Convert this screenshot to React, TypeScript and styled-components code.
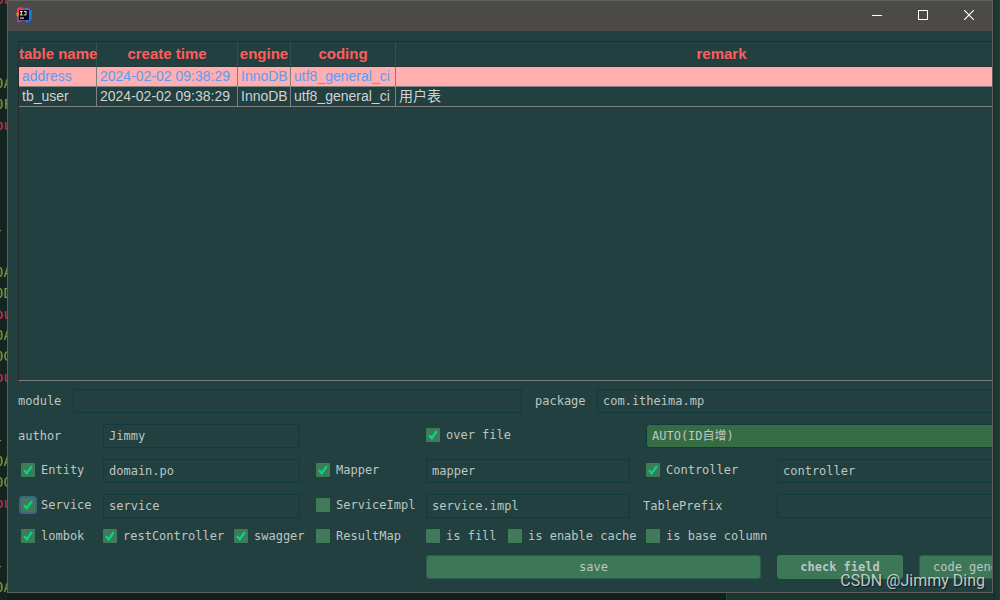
import React from "react";
import styled, { createGlobalStyle, css } from "styled-components";

const mono = `"DejaVu Sans Mono", "Noto Sans CJK SC", monospace`;
const sans = `"Liberation Sans", "Noto Sans CJK SC", sans-serif`;

const color = {
  panel: "#21403f",
  title: "#4c4a48",
  frame: "#5f5f5c",
  fieldLine: "#0f3a40",
  text: "#bfc5c2",
  button: "#3c7858",
  grid: "#808080",
};

const GlobalStyle = createGlobalStyle`
  * { box-sizing: border-box; }
  body { margin: 0; background: #122220; }
  button, input, select { font: inherit; color: inherit; margin: 0; }
`;

const Desktop = styled.div`
  position: relative;
  display: grid;
  grid-template-columns: 7px minmax(0, 1fr) 7px;
  grid-template-rows: minmax(0, 1fr) 7px;
  height: 100vh;
  min-height: 480px;
  overflow: hidden;
  background: #132421;
  font: 12px/16px ${mono};
  color: ${color.text};
`;

const EditorEdge = styled.div`
  grid-row: 1 / 3;
  display: flex;
  flex-direction: column;
  overflow: hidden;
  margin-top: -11px;
  font-size: 14px;
  line-height: 21px;
`;

const CodeLine = styled.div<{ $tone: Tone }>`
  flex: none;
  height: 21px;
  text-indent: -5px;
  white-space: nowrap;
  color: ${(p) => (p.$tone === "keyword" ? "#d0344f" : "#7c9c3e")};
`;

const RightEdge = styled.div`
  grid-row: 1 / 3;
  grid-column: 3;
  background: linear-gradient(90deg, #17302e, #1f3d3a);
`;

const BottomEdge = styled.div`
  grid-row: 2;
  grid-column: 2;
  display: flex;
  &::before {
    content: "";
    flex: 720;
    background: #0f1f1e;
  }
  &::after {
    content: "";
    flex: 266;
    background: #1a3432;
    border-left: 1px solid #24423f;
  }
`;

const Window = styled.main`
  grid-row: 1;
  grid-column: 2;
  display: flex;
  flex-direction: column;
  min-width: 0;
  overflow: hidden;
  border: 1px solid ${color.frame};
  background: ${color.panel};
`;

const TitleBar = styled.header`
  display: flex;
  align-items: center;
  justify-content: space-between;
  height: 30px;
  flex: none;
  padding-left: 8px;
  background: ${color.title};
`;

const TitleIcon = styled.span`
  display: flex;
  padding-bottom: 2px;
`;

const WindowControls = styled.div`
  display: flex;
  height: 100%;
`;

const ControlButton = styled.button`
  display: flex;
  align-items: center;
  justify-content: center;
  width: 46px;
  padding: 0 0 2px;
  border: 0;
  background: none;
  color: #fff;
`;

const Content = styled.div`
  flex: 1;
  min-height: 0;
  display: flex;
  flex-direction: column;
  padding: 10px 0 13px 10px;
`;

const TablePane = styled.section`
  flex: 1;
  min-height: 0;
  overflow: hidden;
  margin-bottom: 8px;
  border: solid #2b2b2b;
  border-width: 1px 0 0 1px;
  border-bottom: 1px solid #7d7a7a;
`;

const DataTable = styled.table`
  width: calc(100% + 56px);
  table-layout: fixed;
  border-collapse: separate;
  border-spacing: 0;
  font: 14px/19px ${sans};
`;

const HeadCell = styled.th`
  height: 25px;
  padding: 0;
  border-right: 1px solid #28554c;
  border-bottom: 1px solid #2b3436;
  font-size: 15px;
  line-height: 24px;
  color: #ff5d5d;
  white-space: nowrap;
`;

const BodyRow = styled.tr<{ $selected: boolean }>`
  background: ${(p) => (p.$selected ? "#ffafaf" : "transparent")};
  color: ${(p) => (p.$selected ? "#589df6" : "#d0d3d2")};
`;

const BodyCell = styled.td`
  height: 20px;
  padding: 0 0 0 3px;
  border-right: 1px solid ${color.grid};
  border-bottom: 1px solid ${color.grid};
  white-space: nowrap;
`;

const Form = styled.form`
  flex: none;
  display: flex;
  flex-direction: column;
  gap: 11px;
`;

const NameRow = styled.div`
  display: grid;
  grid-template-columns: 55px minmax(0, 449fr) 75px minmax(0, 395fr);
  align-items: center;
`;

const FieldRow = styled.div`
  display: grid;
  grid-template-columns: 85px minmax(0, 213fr) 110px minmax(0, 217fr) 134px minmax(0, 215fr);
`;

const OptionRow = styled(FieldRow)`
  height: 15px;
  align-items: start;
`;

const Cell = styled.div<{ $from?: number; $span?: number; $end?: number }>`
  display: flex;
  align-items: center;
  min-width: 0;
  ${(p) => p.$from && css`grid-column: ${p.$from} / span ${p.$span ?? 1};`}
  padding-right: ${(p) => p.$end ?? 0}px;
`;

const PairCell = styled.div<{ $first: number }>`
  display: grid;
  grid-template-columns: ${(p) => p.$first}px 1fr;
`;

const Label = styled.label<{ $inset?: boolean }>`
  padding-left: ${(p) => (p.$inset ? 13 : 0)}px;
  line-height: 24px;
  white-space: nowrap;
`;

const TextField = styled.input<{ $cut?: boolean }>`
  width: 100%;
  min-width: 0;
  height: 24px;
  padding: 0 5px;
  border: 1px solid ${color.fieldLine};
  ${(p) => p.$cut && css`border-right: 0;`}
  background: transparent;
  outline: 0;
`;

const Select = styled.select`
  appearance: none;
  width: 100%;
  height: 24px;
  margin-left: 3px;
  padding: 0 5px;
  border: 1px solid ${color.fieldLine};
  border-right: 0;
  border-radius: 3px 0 0 3px;
  background: #366c42;
`;

const CheckLabel = styled.label<{ $inset?: boolean; $tall?: boolean }>`
  display: flex;
  align-items: center;
  gap: 6px;
  height: ${(p) => (p.$tall ? 24 : 14)}px;
  padding: 0 0 ${(p) => (p.$tall ? 2 : 0)}px ${(p) => (p.$inset ? 3 : 0)}px;
  white-space: nowrap;
`;

const CheckWrap = styled.span`
  display: grid;
  flex: none;
  width: 14px;
  height: 14px;
  & > * {
    grid-area: 1 / 1;
  }
`;

const CheckInput = styled.input<{ $focused?: boolean }>`
  appearance: none;
  width: 14px;
  height: 14px;
  border-radius: 1px;
  background: #41795b;
  ${(p) =>
    p.$focused &&
    css`
      border-radius: 2px;
      box-shadow: 0 0 0 2px #3e6388;
    `}
`;

const Tick = styled.svg`
  width: 14px;
  height: 14px;
  pointer-events: none;
`;

const ActionButton = styled.button<{ $primary?: boolean; $cut?: boolean }>`
  height: 24px;
  padding: 0 12px;
  border: 1px solid ${(p) => (p.$primary ? color.button : "#2f5d4b")};
  border-radius: 3px;
  background: ${color.button};
  font-weight: ${(p) => (p.$primary ? 700 : 400)};
  white-space: nowrap;
  overflow: hidden;
  flex: ${(p) => (p.$primary ? "0 0 126px" : "1 1 0")};
  ${(p) =>
    p.$cut &&
    css`
      margin-left: 16px;
      padding: 0 0 0 13px;
      border-right: 0;
      border-radius: 3px 0 0 3px;
      text-align: left;
    `}
`;

const Watermark = styled.div`
  position: absolute;
  right: 15px;
  bottom: 9px;
  font: 16px/20px Roboto, sans-serif;
  color: rgba(225, 230, 228, 0.85);
  text-shadow: 1px 1px 1px rgba(0, 0, 0, 0.6);
`;

type Tone = "text" | "keyword";

const codeLines: [string, Tone][] = [
  ["ou", "keyword"], ["", "text"], ["", "text"], ["", "text"], ["0A", "text"],
  ["0F", "text"], ["ou", "keyword"], ["", "text"], ["", "text"], ["", "text"],
  ["", "text"], ["-", "text"], ["", "text"], ["0A", "text"], ["0D", "text"],
  ["ou", "keyword"], ["0A", "text"], ["0G", "text"], ["ou", "keyword"], ["", "text"],
  ["", "text"], ["-", "text"], ["0A", "text"], ["0G", "text"], ["ou", "keyword"],
  ["", "text"], ["", "text"], ["-", "text"], ["0A", "text"],
];

const columns = [
  { title: "table name", width: 78 },
  { title: "create time", width: 141 },
  { title: "engine", width: 53 },
  { title: "coding", width: 105 },
  { title: "remark", width: undefined },
];

const rows = [
  ["address", "2024-02-02 09:38:29", "InnoDB", "utf8_general_ci", ""],
  ["tb_user", "2024-02-02 09:38:29", "InnoDB", "utf8_general_ci", "用户表"],
];

type CheckProps = {
  label: string;
  checked?: boolean;
  inset?: boolean;
  tall?: boolean;
  focused?: boolean;
};

function Check({ label, checked = false, inset, tall, focused }: CheckProps) {
  const [on, setOn] = React.useState(checked);
  return (
    <CheckLabel $inset={inset} $tall={tall}>
      <CheckWrap>
        <CheckInput
          type="checkbox"
          checked={on}
          $focused={focused}
          onChange={(e) => setOn(e.target.checked)}
        />
        {on && (
          <Tick viewBox="0 0 14 14" aria-hidden="true">
            <path d="M3 7.2 L5.8 10.2 L10.8 3.2" fill="none" stroke="#00dc82" strokeWidth="2.2" />
          </Tick>
        )}
      </CheckWrap>
      {label}
    </CheckLabel>
  );
}

function IdeaIcon() {
  return (
    <svg width="16" height="16" viewBox="0 0 16 16" aria-hidden="true">
      <path d="M1 1 L6 0 L9 3 L5 9 L1 8 Z" fill="#fc2c5b" />
      <path d="M0 6 L4 5 L5 10 L1 10 Z" fill="#e8772e" />
      <path d="M8 2 L11 0.5 L16 4 L15.5 13 L11 16 L8 13 Z" fill="#1a74ee" />
      <path d="M8 2 L11 0.5 L14 2.5 L11 5 Z" fill="#6a63c8" />
      <path d="M1 9 L6 10 L10 13 L6 14 L3 16 L1 14.5 Z" fill="#8d4a96" />
      <rect x="3" y="3" width="10" height="10" fill="#050505" />
      <path d="M4 4.5 H6.6 M5.3 4.5 V8 M4 8 H6.6 M8 4.5 H10 V7.2 Q10 8 9 8 H7.6" fill="none" stroke="#ddd" strokeWidth="1.1" />
      <rect x="4" y="10.6" width="4" height="1" fill="#fff" />
    </svg>
  );
}

export default function App() {
  return (
    <>
      <GlobalStyle />
      <Desktop>
        <EditorEdge aria-hidden="true">
          {codeLines.map(([text, tone], i) => (
            <CodeLine key={i} $tone={tone}>{text}</CodeLine>
          ))}
        </EditorEdge>
        <Window>
          <TitleBar>
            <TitleIcon><IdeaIcon /></TitleIcon>
            <WindowControls>
              <ControlButton type="button" aria-label="Minimize">
                <svg width="10" height="10"><path d="M0 5.5 H10" stroke="currentColor" /></svg>
              </ControlButton>
              <ControlButton type="button" aria-label="Maximize">
                <svg width="10" height="10"><rect x="0.5" y="0.5" width="9" height="9" fill="none" stroke="currentColor" /></svg>
              </ControlButton>
              <ControlButton type="button" aria-label="Close">
                <svg width="10" height="10"><path d="M0 0 L10 10 M10 0 L0 10" stroke="currentColor" strokeWidth="1.2" /></svg>
              </ControlButton>
            </WindowControls>
          </TitleBar>
          <Content>
            <TablePane>
              <DataTable>
                <colgroup>
                  {columns.map((c) => <col key={c.title} width={c.width} />)}
                </colgroup>
                <thead>
                  <tr>{columns.map((c) => <HeadCell key={c.title} scope="col">{c.title}</HeadCell>)}</tr>
                </thead>
                <tbody>
                  {rows.map((r, i) => (
                    <BodyRow key={r[0]} $selected={i === 0}>
                      {r.map((v, j) => <BodyCell key={j}>{v}</BodyCell>)}
                    </BodyRow>
                  ))}
                </tbody>
              </DataTable>
            </TablePane>
            <Form onSubmit={(e) => e.preventDefault()}>
              <NameRow>
                <Label htmlFor="module">module</Label>
                <TextField id="module" />
                <Label htmlFor="package" $inset>package</Label>
                <TextField id="package" defaultValue="com.itheima.mp" $cut />
              </NameRow>
              <FieldRow>
                <Label htmlFor="author">author</Label>
                <Cell $end={16}><TextField id="author" defaultValue="Jimmy" /></Cell>
                <Cell $from={4}><Check label="over file" checked tall /></Cell>
                <Cell $from={5} $span={2}>
                  <Select aria-label="id type" defaultValue="auto">
                    <option value="auto">AUTO(ID自增)</option>
                  </Select>
                </Cell>
              </FieldRow>
              <FieldRow>
                <Check label="Entity" checked inset tall />
                <Cell $end={16}><TextField aria-label="Entity package" defaultValue="domain.po" /></Cell>
                <Check label="Mapper" checked tall />
                <Cell $end={13}><TextField aria-label="Mapper package" defaultValue="mapper" /></Cell>
                <Check label="Controller" checked inset tall />
                <TextField aria-label="Controller package" defaultValue="controller" $cut />
              </FieldRow>
              <FieldRow>
                <Check label="Service" checked inset tall focused />
                <Cell $end={16}><TextField aria-label="Service package" defaultValue="service" /></Cell>
                <Check label="ServiceImpl" tall />
                <Cell $end={13}><TextField aria-label="ServiceImpl package" defaultValue="service.impl" /></Cell>
                <Label htmlFor="prefix">TablePrefix</Label>
                <TextField id="prefix" $cut />
              </FieldRow>
              <OptionRow>
                <Check label="lombok" checked inset />
                <PairCell $first={131}>
                  <Check label="restController" checked />
                  <Check label="swagger" checked />
                </PairCell>
                <Check label="ResultMap" />
                <PairCell $first={82}>
                  <Check label="is fill" />
                  <Check label="is enable cache" />
                </PairCell>
                <Cell $from={5} $span={2}><Check label="is base column" inset /></Cell>
              </OptionRow>
              <FieldRow>
                <Cell $from={4} $span={2} $end={16}><ActionButton type="submit">save</ActionButton></Cell>
                <Cell $from={6}>
                  <ActionButton type="button" $primary>check field</ActionButton>
                  <ActionButton type="button" $cut>code generate</ActionButton>
                </Cell>
              </FieldRow>
            </Form>
          </Content>
        </Window>
        <RightEdge />
        <BottomEdge />
        <Watermark>CSDN @Jimmy Ding</Watermark>
      </Desktop>
    </>
  );
}
